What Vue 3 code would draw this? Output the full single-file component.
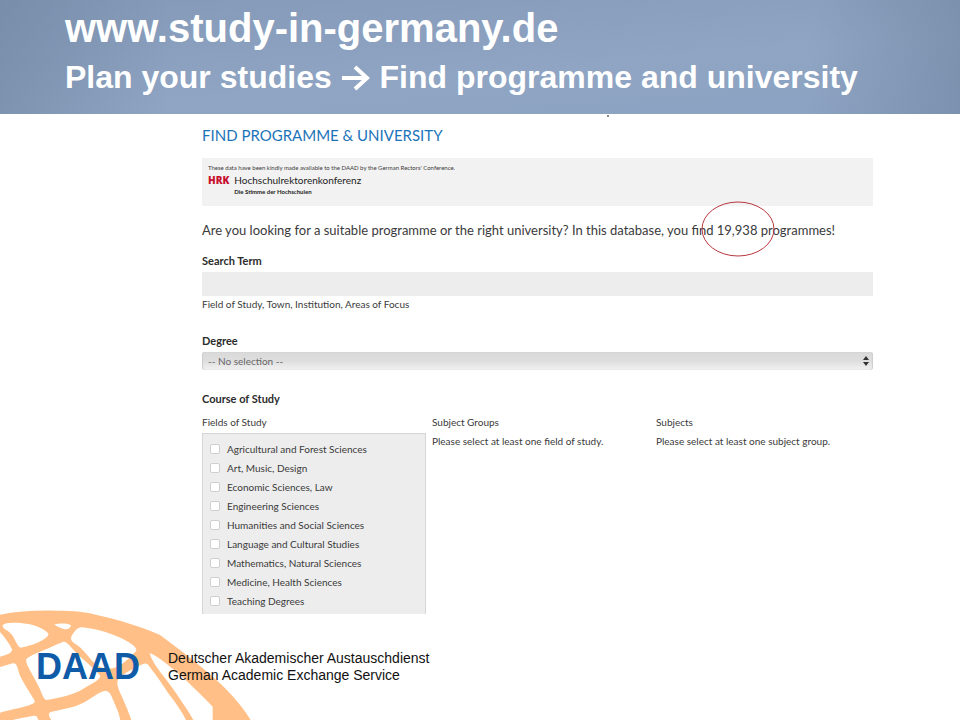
<template>
    <div class="slide">
        <header class="banner">
            <h1>www.study-in-germany.de</h1>
            <h2>
                Plan your studies
                <svg class="arrow" viewBox="0 0 30 26" aria-hidden="true">
                    <path d="M1 13H26M14 2L26 13L14 24" />
                </svg>
                Find programme and university
            </h2>
        </header>

        <main class="content">
            <h3 class="section-title">FIND PROGRAMME &amp; UNIVERSITY</h3>

            <div class="notice">
                <p class="notice-text">These data have been kindly made available to the DAAD by the German Rectors' Conference.</p>
                <div class="hrk">
                    <strong class="hrk-mark">HRK</strong>
                    <div>
                        <div class="hrk-name">Hochschulrektorenkonferenz</div>
                        <div class="hrk-claim">Die Stimme der Hochschulen</div>
                    </div>
                </div>
            </div>

            <p class="intro">
                Are you looking for a suitable programme or the right university? In this database, you find
                <span class="count">19,938<svg class="ring" viewBox="0 0 74 57" aria-hidden="true"><ellipse cx="37" cy="28" rx="36" ry="27" /></svg></span>
                programmes!
            </p>

            <form @submit.prevent>
                <label class="label" for="term">Search Term</label>
                <input id="term" v-model="term" class="term" type="text">
                <p class="hint">Field of Study, Town, Institution, Areas of Focus</p>

                <label class="label" for="degree">Degree</label>
                <div class="select-wrap">
                    <select id="degree" v-model="degree" class="degree">
                        <option value="">-- No selection --</option>
                    </select>
                    <svg class="select-arrows" viewBox="0 0 6 10" aria-hidden="true">
                        <path d="M3 0L6 4H0ZM0 6H6L3 10Z" />
                    </svg>
                </div>

                <h4 class="label course">Course of Study</h4>
                <div class="columns">
                    <fieldset class="column">
                        <legend>Fields of Study</legend>
                        <div class="field-list">
                            <label v-for="field in fields" :key="field" class="field">
                                <input v-model="selected" type="checkbox" :value="field">
                                <span>{{ field }}</span>
                            </label>
                        </div>
                    </fieldset>
                    <div class="column">
                        <h5>Subject Groups</h5>
                        <p>Please select at least one field of study.</p>
                    </div>
                    <div class="column">
                        <h5>Subjects</h5>
                        <p>Please select at least one subject group.</p>
                    </div>
                </div>
            </form>
        </main>

        <footer class="footer">
            <svg class="globe" viewBox="0 0 780 360" aria-hidden="true">
                <path class="land" d="M0 44C50 34 110 30 170 32C220 32 260 35 300 47C350 58 420 78 480 105L540 150C590 188 630 222 660 250C700 288 730 325 752 360H0Z" />
                <path class="gap" d="M8 76C14 66 60 67 90 73C118 80 140 92 146 103C140 120 95 138 62 143C48 136 46 112 30 98C18 88 8 88 8 76Z" />
                <path class="gap" d="M163 73C180 69 205 69 213 76C210 88 200 90 188 86C178 84 168 78 163 73Z" />
                <path class="gap" d="M0 96C14 112 28 130 36 148C38 158 20 166 0 170Z" />
                <path class="gap" d="M0 201L38 190C50 188 52 200 58 222C70 250 92 280 105 304C102 318 50 324 0 338Z" />
                <path class="gap" d="M38 360C60 354 88 349 102 347C110 346 113 352 115 360Z" />
                <path class="gap" d="M78 180C82 168 130 152 188 126C202 122 214 146 238 168C262 188 282 206 300 226C304 240 276 250 250 266C222 284 175 294 140 300C128 298 124 270 110 248C98 222 80 200 78 180Z" />
                <path class="gap" d="M213 112C220 98 232 80 246 82C290 86 350 104 385 126C402 136 410 144 409 152C396 166 378 186 352 200C330 210 306 206 290 196C272 180 268 170 240 142C226 130 212 128 213 112Z" />
                <path class="gap" d="M148 338C172 328 216 326 250 308C276 294 300 274 316 272C332 272 338 298 346 316C354 332 358 346 361 360H154C150 352 144 346 148 338Z" />
                <path class="gap" d="M352 244C360 224 384 216 404 204C420 196 434 186 442 192C460 214 482 244 504 278C530 312 548 338 558 360H394C388 342 378 318 370 300C362 280 350 262 352 244Z" />
                <path class="gap" d="M449 160C456 160 484 178 512 202C552 232 604 286 638 320V360H580C566 334 536 290 510 254C486 222 456 188 449 160Z" />
            </svg>
            <strong class="daad">DAAD</strong>
            <p class="org">Deutscher Akademischer Austauschdienst<br>German Academic Exchange Service</p>
        </footer>
    </div>
</template>

<script setup>
import { ref } from 'vue';

const term = ref('');
const degree = ref('');
const selected = ref([]);

const fields = [
    'Agricultural and Forest Sciences',
    'Art, Music, Design',
    'Economic Sciences, Law',
    'Engineering Sciences',
    'Humanities and Social Sciences',
    'Language and Cultural Studies',
    'Mathematics, Natural Sciences',
    'Medicine, Health Sciences',
    'Teaching Degrees',
];
</script>

<style>
body {
    margin: 0;
    background: #fff;
}
</style>

<style scoped>
* {
    box-sizing: border-box;
}

h1, h2, h3, h4, h5, p {
    margin: 0;
}

.slide {
    display: flex;
    flex-direction: column;
    min-height: 100vh;
    overflow: hidden;
    font-family: Lato, "Liberation Sans", sans-serif;
    color: #3a3a3a;
}

.banner {
    padding: 4px 65px 12px;
    color: #fff;
    font-family: "Liberation Sans", Arial, sans-serif;
    background:
        linear-gradient(90deg, rgba(108, 130, 158, 0.5), transparent 18%, transparent 84%, rgba(112, 134, 162, 0.6)),
        linear-gradient(175deg, #8399b7, #8fa5c3 60%, #8ca2c2);
}

h1 {
    font-size: 40px;
    line-height: 48px;
}

h2 {
    font-size: 32px;
    line-height: 50px;
}

.arrow {
    width: 30px;
    height: 26px;
    vertical-align: -3px;
    fill: none;
    stroke: #fff;
    stroke-width: 4;
}

.content {
    position: relative;
    padding: 10px 87px 0 202px;
}

/* tail of the line that is cut off under the banner */
.content::before {
    content: "";
    position: absolute;
    top: 1px;
    left: 607px;
    width: 2px;
    height: 2px;
    background: #888;
}

.section-title {
    font-size: 15px;
    line-height: 22px;
    font-weight: 400;
    color: #1c74b8;
}

.notice {
    margin-top: 12px;
    padding: 6px;
    min-height: 48px;
    background: #f2f2f2;
}

.notice-text {
    font-size: 6px;
    line-height: 8px;
}

.hrk {
    display: flex;
    gap: 5px;
    color: #222;
}

.hrk-mark {
    font-family: "Open Sans", sans-serif;
    font-size: 10px;
    line-height: 16px;
    font-weight: 800;
    color: #c8102e;
}

.hrk-name {
    font-size: 10px;
    line-height: 16px;
}

.hrk-claim {
    font-size: 6px;
    line-height: 8px;
    font-weight: 700;
}

.intro {
    margin-top: 14px;
    font-size: 13px;
    line-height: 20px;
}

.count {
    position: relative;
}

.ring {
    position: absolute;
    left: -16px;
    top: -21px;
    width: 74px;
    height: 57px;
    fill: none;
    stroke: #b8383f;
    stroke-width: 1;
}

.label {
    display: block;
    font-size: 11px;
    line-height: 16px;
    font-weight: 700;
    color: #2c2c2c;
}

form {
    margin-top: 13px;
    font-size: 10px;
}

.term {
    display: block;
    width: 100%;
    height: 24px;
    margin-top: 3px;
    border: 0;
    background: #ededed;
}

.hint {
    margin: 0 0 21px;
    line-height: 16px;
}

.select-wrap {
    position: relative;
    margin-top: 3px;
}

.degree {
    display: block;
    width: 100%;
    height: 18px;
    padding: 0 6px;
    border: 0;
    border-radius: 3px;
    appearance: none;
    background: linear-gradient(#d9d9d9, #dedede 50%, #f2f2f2);
    box-shadow: inset 1px 0 1px #ccc, inset -1px 0 1px #ccc;
    font: inherit;
    color: #666;
}

.select-arrows {
    position: absolute;
    right: 4px;
    top: 4px;
    width: 6px;
    height: 10px;
    fill: #333;
    pointer-events: none;
}

.course {
    margin-top: 21px;
}

.columns {
    display: grid;
    grid-template-columns: 224px 218px 1fr;
    column-gap: 6px;
    margin-top: 6px;
}

.column {
    min-width: 0;
    margin: 0;
    padding: 0;
    border: 0;
}

.column legend,
.column h5 {
    padding: 0;
    font-size: 10px;
    font-weight: 400;
    line-height: 18px;
}

.column p {
    margin-top: 2px;
    line-height: 16px;
}

.field-list {
    margin-top: 2px;
    padding: 5px 7px 4px;
    background: #ededed;
    border: 1px solid #d6d6d6;
    border-bottom: 0;
}

.field {
    display: flex;
    align-items: center;
    gap: 7px;
    height: 19px;
}

.field input {
    appearance: none;
    width: 10px;
    height: 10px;
    margin: 0;
    border: 1px solid #cfcfcf;
    border-radius: 2px;
    background: #fff;
}

.field input:checked {
    background: #1c74b8;
}

.footer {
    position: relative;
    display: flex;
    align-items: center;
    gap: 28px;
    margin-top: auto;
    padding: 32px 36px 35px;
}

.globe {
    position: absolute;
    left: 0;
    bottom: 0;
    width: 260px;
    height: 120px;
    z-index: -1;
}

.land {
    fill: #ffbf86;
}

.gap {
    fill: #fff;
}

.daad {
    font-family: "Liberation Sans", Arial, sans-serif;
    font-size: 36px;
    line-height: 36px;
    color: #0f5ba8;
}

.org {
    font-family: "Liberation Sans", Arial, sans-serif;
    font-size: 14px;
    line-height: 17px;
    color: #111;
}
</style>
